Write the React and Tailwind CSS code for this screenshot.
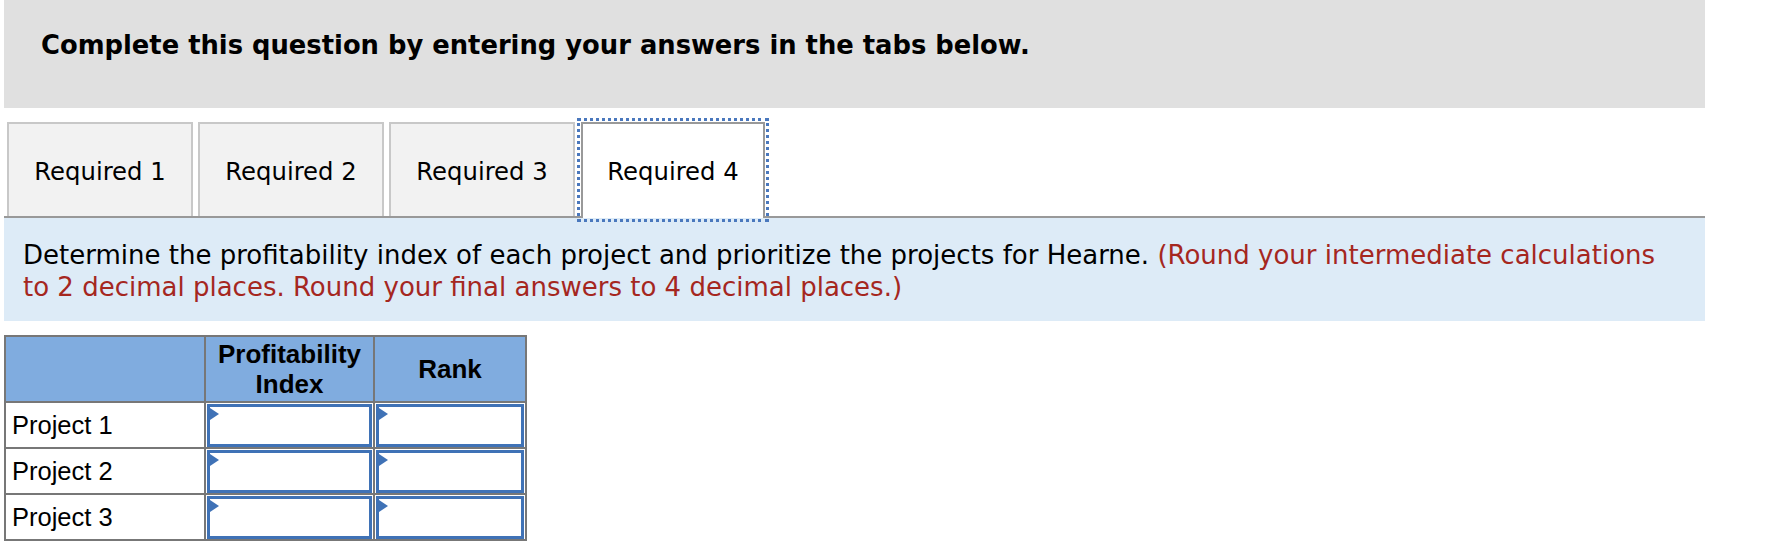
import React from "react";

function Tab({ label, active }) {
  if (active) {
    return (
      <div className="ml-[1px] -mb-[2px] flex h-[96px] w-[184px] items-center justify-center border-2 border-b-0 border-[#999999] bg-white pt-[3px] text-[24.3px] text-black outline-3 outline-dotted outline-[#4a78bd] outline-offset-[1px]">
        {label}
      </div>
    );
  }
  return (
    <div className="flex h-[94px] w-[186px] items-center justify-center border-2 border-b-0 border-[#c8c8c8] bg-[#f2f2f2] pt-[4px] text-[24.3px] text-black">
      {label}
    </div>
  );
}

function InputCell() {
  return (
    <td className="border-2 border-[#777777] px-[1px] pb-0 pt-[1px] align-top">
      <div className="relative h-[43px] w-full border-[3px] border-[#3f72b6] bg-white">
        <svg
          className="absolute left-0 top-[1px]"
          width="10"
          height="12"
          viewBox="0 0 10 12"
        >
          <polygon points="0,0 9,6 0,12" fill="#3f72b6" />
        </svg>
      </div>
    </td>
  );
}

export default function App() {
  const rows = ["Project 1", "Project 2", "Project 3"];
  return (
    <div className="min-h-[560px] w-[1786px] bg-white font-[DejaVu_Sans,Verdana,sans-serif]">
      <div className="ml-[4px] w-[1701px]">
        <div className="flex h-[108px] items-start bg-[#e0e0e0] pl-[37px] pt-[28px]">
          <h1 className="text-[25.8px] font-bold leading-[34px] text-black">
            Complete this question by entering your answers in the tabs below.
          </h1>
        </div>

        <div className="mt-[14px] flex items-end gap-[5px] border-b-2 border-[#999999] pl-[3px]">
          <Tab label="Required 1" />
          <Tab label="Required 2" />
          <Tab label="Required 3" />
          <Tab label="Required 4" active />
        </div>

        <div className="bg-[#ddebf7] pb-[18px] pl-[19px] pr-[19px] pt-[21px] text-[26px] leading-[32px] text-black">
          Determine the profitability index of each project and prioritize the
          projects for Hearne.{" "}
          <span className="text-[#a5271f]">
            (Round your intermediate calculations to 2 decimal places. Round
            your final answers to 4 decimal places.)
          </span>
        </div>

        <table className="mt-[14px] border-collapse font-[Liberation_Sans,Arial,sans-serif] text-black">
          <thead>
            <tr className="h-[66px] bg-[#80acdf]">
              <th className="w-[200px] border-2 border-[#777777]"></th>
              <th className="w-[169px] border-2 border-[#777777] text-[26px] font-bold leading-[30px]">
                Profitability
                <br />
                Index
              </th>
              <th className="w-[152px] border-2 border-[#777777] text-[26px] font-bold leading-[30px]">
                Rank
              </th>
            </tr>
          </thead>
          <tbody>
            {rows.map((r) => (
              <tr key={r} className="h-[46px]">
                <td className="border-2 border-[#777777] py-0 pl-[6px] text-left text-[25.5px] leading-[28px]">
                  {r}
                </td>
                <InputCell />
                <InputCell />
              </tr>
            ))}
          </tbody>
        </table>
      </div>
    </div>
  );
}
